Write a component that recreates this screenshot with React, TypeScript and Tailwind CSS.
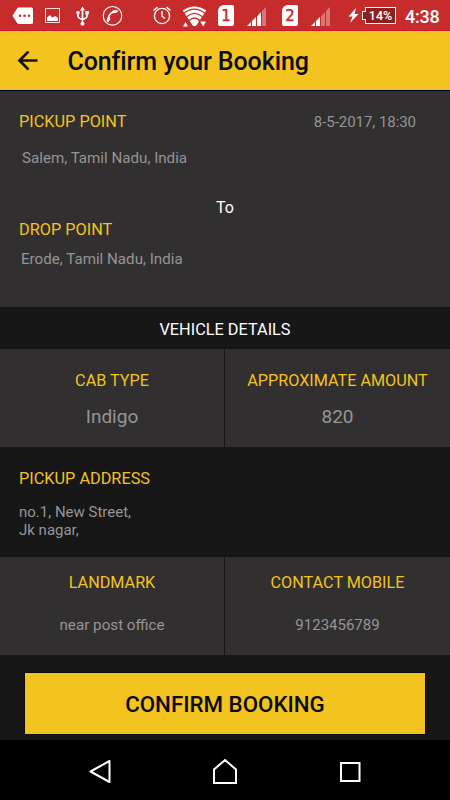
import type { ReactNode } from 'react'

interface CellProps {
  label: string
  value: string
  className?: string
  valueClassName: string
}

function Cell({ label, value, className, valueClassName }: CellProps) {
  return (
    <div className={`flex flex-col items-center bg-[#312f30] ${className}`}>
      <div className="text-[16.200px] leading-5 text-[#f3c31f]">{label}</div>
      <div className={`leading-5 text-[#969495] ${valueClassName}`}>{value}</div>
    </div>
  )
}

interface IconProps {
  width: number
  className?: string
  children: ReactNode
}

// every status icon shares the full height of the bar
function StatusIcon({ width, className, children }: IconProps) {
  return (
    <svg width={width} height={31} viewBox={`0 0 ${width} 31`} fill="none" className={`shrink-0 ${className}`}>
      {children}
    </svg>
  )
}

function SimIcon({ digit, className }: { digit: string, className: string }) {
  return (
    <div className={`mt-[5px] h-[21px] w-4 shrink-0 bg-white text-center font-['DejaVu_Sans',sans-serif] text-[15px] leading-[22px] text-[#c72c2c] [-webkit-text-stroke:0.5px_#c72c2c] rounded-[2px] rounded-tl-[6px] ${className}`}>
      {digit}
    </div>
  )
}

function SignalIcon({ bars, className }: { bars: number, className: string }) {
  const shapes = [
    'M0 26 L4 22 V26Z',
    'M5 26 V21 L9 17 V26Z',
    'M10 26 V16.500 L14 12 V26Z',
    'M15 26 V11 L19 7 V26Z',
  ]
  return (
    <StatusIcon width={19} className={className}>
      {shapes.map((d, i) => (
        <path key={d} d={d} fill="#fff" fillOpacity={i < bars ? 1 : 0.35} />
      ))}
    </StatusIcon>
  )
}

function StatusBar() {
  return (
    <div className="flex h-[31px] items-start border-b border-[#c9172c] bg-[#c72c2c]">
      <StatusIcon width={22} className="ml-3">
        <path d="M6.500 7.500 H19.500 Q21 7.500 21 9 V22.500 Q21 24 19.500 24 H6.500 Q5 23.500 4.500 22 L0.500 15.700 L4.500 9.500 Q5 8 6.500 7.500Z" fill="#fff" />
        <circle cx="8" cy="15.700" r="1.300" fill="#c72c2c" />
        <circle cx="12.500" cy="15.700" r="1.300" fill="#c72c2c" />
        <circle cx="17" cy="15.700" r="1.300" fill="#c72c2c" />
      </StatusIcon>
      <StatusIcon width={16} className="ml-[11px]">
        <rect x="0.500" y="8.500" width="14" height="14" stroke="#fff" strokeOpacity="0.85" />
        <path d="M2 21 V17.500 L5 15 L7 17.500 L10.500 16 L13 18 V21Z" fill="#fff" />
      </StatusIcon>
      <StatusIcon width={14} className="ml-[15px]">
        <path d="M6.500 9 V24 M2 13 V16 Q2 18 4 18.500 L6.500 19.500 M11 13 V16 Q11 18 9 18.500 L6.500 19.500" stroke="#fff" strokeWidth="1.700" />
        <path d="M6.500 6.500 L9 10.500 H4Z" fill="#fff" />
        <circle cx="2" cy="12.800" r="1.800" fill="#fff" />
        <rect x="9.300" y="11" width="3.500" height="3.500" fill="#fff" />
        <circle cx="6.500" cy="23.800" r="2" fill="#fff" />
      </StatusIcon>
      <StatusIcon width={21} className="ml-[12px]">
        <circle cx="10.500" cy="15.800" r="9.300" stroke="#fff" strokeWidth="1.100" />
        <path d="M11 12 Q7 14 6.300 18.500" stroke="#fff" strokeWidth="1.700" />
        <path d="M11.300 11.800 L14.500 11.200" stroke="#fff" strokeWidth="2.800" strokeLinecap="round" />
        <path d="M6 20.600 L6.900 18.200" stroke="#fff" strokeWidth="2.800" strokeLinecap="round" />
      </StatusIcon>
      <StatusIcon width={20} className="ml-[29px]">
        <circle cx="10" cy="16" r="7.600" stroke="#fff" strokeWidth="1.400" />
        <path d="M10 11 V16.200 L13 18.500" stroke="#fff" strokeWidth="1.400" />
        <path d="M1.500 10.500 L5.500 7.200 M18.500 10.500 L14.500 7.200" stroke="#fff" strokeWidth="1.500" />
      </StatusIcon>
      <StatusIcon width={26} className="ml-[10px]">
        <path d="M0.800 10.500 Q12.500 2.500 24.200 10.500 L14.700 25 Q12.500 27.500 10.300 25Z" fill="#fff" />
        <path d="M2 13.200 Q12.500 5 23 13.200 M4.500 16.700 Q12.500 10 20.500 16.700 M7.300 20.400 Q12.500 15.700 17.700 20.400" stroke="#c72c2c" strokeWidth="1.300" />
        <path d="M-1.500 27.500 L3.500 18 L9 27.500Z M16 20 H26 L20.500 29Z" fill="#c72c2c" />
        <path d="M1 26.500 L3.500 22 L6 26.500Z M18.300 21.500 H24 L21.200 26.500Z" fill="#fff" />
      </StatusIcon>
      <SimIcon digit="1" className="ml-[10px]" />
      <SignalIcon bars={3} className="ml-[13px]" />
      <SimIcon digit="2" className="ml-4" />
      <SignalIcon bars={2} className="ml-[13px]" />
      <StatusIcon width={12} className="ml-[18px]">
        <path d="M8 8 L0.500 16.500 H4.500 L2 23 L10.500 14 H6.500Z" fill="#fff" />
      </StatusIcon>
      <div className="relative ml-[5px] mt-[7px] h-[17px] w-[31px] shrink-0 border border-white bg-[#8e1f20] text-center text-[12.500px] font-medium leading-[16px] text-white">
        <span className="absolute -left-[4px] top-[3px] h-[9px] w-[4px] border border-r-0 border-white bg-[#8e1f20]" />
        14%
      </div>
      <div className="ml-[9px] mt-[6px] shrink-0 text-[18px] font-medium leading-[21px] tracking-[-0.200px] text-white">4:38</div>
    </div>
  )
}

function NavBar() {
  return (
    <div className="flex h-[60px] items-center justify-between bg-black px-[88px] pt-0.5">
      <svg width="24" height="26" viewBox="0 0 24 26" fill="none" stroke="#fff" strokeWidth="2" strokeLinejoin="round">
        <path d="M21.500 3 V24 L2.500 13.500Z" />
      </svg>
      <svg width="26" height="28" viewBox="0 0 26 28" fill="none" stroke="#fff" strokeWidth="2">
        <path d="M2 12.500 L13 3 L24 12.500 V26 H2Z" />
      </svg>
      <svg width="24" height="24" viewBox="0 0 24 24" fill="none" stroke="#fff" strokeWidth="2">
        <rect x="3" y="4" width="18.500" height="18" />
      </svg>
    </div>
  )
}

export default function App() {
  return (
    <div className="h-[800px] w-[450px] overflow-hidden bg-[#171717] font-['Roboto',sans-serif]">
      <StatusBar />

      <div className="flex h-[60px] items-center border-b border-[#020038] bg-[#f3c31f] pl-[17px]">
        <svg width="22" height="20" viewBox="0 0 22 20" fill="none" stroke="#141414" strokeWidth="2.700">
          <path d="M20.500 9.500 H2.500 M11.500 0.500 L2.500 9.500 L11.500 18.500" />
        </svg>
        <h1 className="ml-[28.500px] mt-[3px] text-[25px] font-medium leading-8 tracking-[-0.100px] text-[#0b0b12]">Confirm your Booking</h1>
      </div>

      <div className="h-[216px] bg-[#312f30] pl-[19px] pr-[34px] pt-[21px]">
        <div className="flex justify-between leading-5">
          <div className="text-[16.300px] text-[#f3c31f]">PICKUP POINT</div>
          <div className="text-[15px] tracking-[-0.050px] text-[#969495]">8-5-2017, 18:30</div>
        </div>
        <div className="ml-[3px] mt-4 text-[15.150px] leading-5 text-[#969495]">Salem, Tamil Nadu, India</div>
        <div className="-mr-[15px] mt-[30px] text-center text-[16px] leading-5 text-white">To</div>
        <div className="mt-[2px] text-[16.300px] leading-5 text-[#f3c31f]">DROP POINT</div>
        <div className="ml-[2px] mt-[9px] text-[15.150px] leading-5 text-[#969495]">Erode, Tamil Nadu, India</div>
      </div>

      <div className="h-[42px] pt-[13px] text-center text-[16.300px] leading-5 text-white">VEHICLE DETAILS</div>

      <div className="grid h-[98px] grid-cols-[224px_225px] gap-px">
        <Cell label="CAB TYPE" value="Indigo" className="pt-[22px]" valueClassName="mt-4 text-[19px]" />
        <Cell label="APPROXIMATE AMOUNT" value="820" className="pt-[22px]" valueClassName="mt-4 text-[19px]" />
      </div>

      <div className="h-[110px] pl-[19px] pt-[22px]">
        <div className="text-[16.300px] leading-5 text-[#f3c31f]">PICKUP ADDRESS</div>
        <div className="mt-[15px] text-[15px] leading-[17.500px] text-[#969495]">
          no.1, New Street,<br />Jk nagar,
        </div>
      </div>

      <div className="grid h-[98px] grid-cols-[224px_225px] gap-px">
        <Cell label="LANDMARK" value="near post office" className="pt-4" valueClassName="mt-[22px] text-[15.200px]" />
        <Cell label="CONTACT MOBILE" value="9123456789" className="pt-4" valueClassName="mt-[22px] text-[15px]" />
      </div>

      <div className="h-[85px] px-[25px] pt-[18px]">
        <button className="h-[61px] w-full bg-[#f3c31f] pt-[2px] text-[22.300px] font-medium text-[#0b0b12] shadow-[0_0_0_1px_#0b0b14]">CONFIRM BOOKING</button>
      </div>

      <NavBar />
    </div>
  )
}
